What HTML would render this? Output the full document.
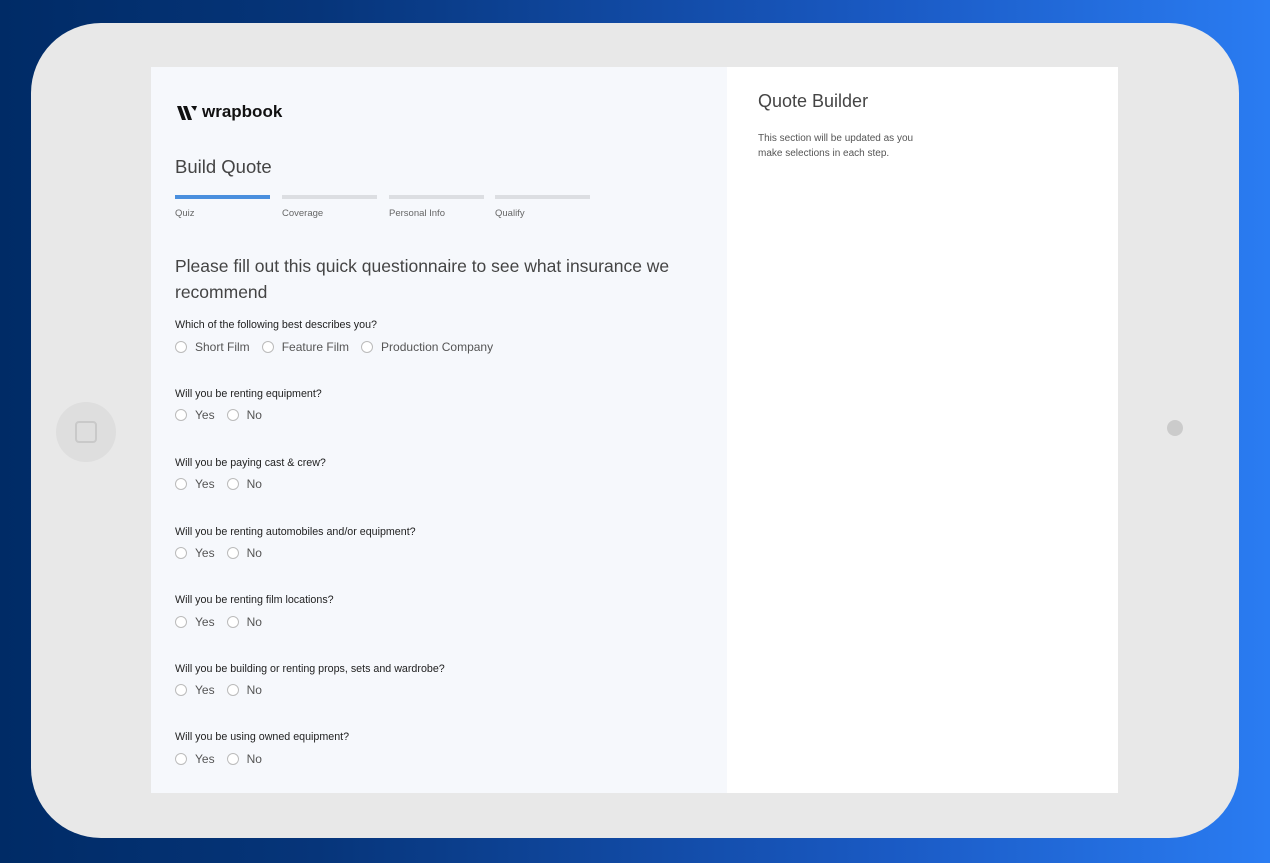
<!DOCTYPE html>
<html><head><meta charset="utf-8"><style>
*{margin:0;padding:0;box-sizing:border-box}
body{width:1270px;height:863px;overflow:hidden;background:linear-gradient(90deg,#002b66 0%,#06357a 25%,#1a5ac4 70%,#2a7cf2 100%);font-family:"Liberation Sans",sans-serif;position:relative}
.tab{position:absolute;left:31px;top:23px;width:1208px;height:815px;background:#e8e8e8;border-radius:70px}
.home{position:absolute;left:56px;top:402px;width:60px;height:60px;border-radius:50%;background:#dedede}
.home i{position:absolute;left:19px;top:19px;width:22px;height:22px;border:2px solid #c9c9c9;border-radius:4px}
.cam{position:absolute;left:1167px;top:420px;width:16px;height:16px;border-radius:50%;background:#cbcbcb}
.left{position:absolute;left:151px;top:67px;width:576px;height:726px;background:#f6f8fc}
.right{position:absolute;left:727px;top:67px;width:391px;height:726px;background:#fff}
.t{position:absolute;color:#333;white-space:nowrap}
.bar{position:absolute;top:195px;height:4px;width:95px;background:#dcdee2}
.lbl{position:absolute;top:208px;font-size:9.5px;color:#666}
.q{position:absolute;left:175px;font-size:10.7px;color:#222}
.opt{position:absolute;left:175px;font-size:12px;color:#555;display:flex;align-items:center}
.opt span{display:inline-block;width:12px;height:12px;border:1px solid #bbb;border-radius:50%;background:#fff;margin-right:8px}
.opt b{font-weight:normal;margin-right:12px}
</style></head><body>
<div class="tab"></div>
<div class="home"><i></i></div>
<div class="cam"></div>
<div class="left"></div>
<div class="right"></div>
<svg style="position:absolute;left:177px;top:106px" width="22" height="14" viewBox="0 0 22 14"><path d="M0 0h4l5 14H5z M6 0h4l5 14h-4z M14 0h6l-2 5z" fill="#111"/></svg>
<div class="t" style="left:202px;top:102px;font-size:17px;font-weight:bold;color:#111">wrapbook</div>
<div class="t" style="left:175px;top:156px;font-size:18.5px;color:#444">Build Quote</div>
<div class="bar" style="left:175px;background:#4a8fde"></div>
<div class="bar" style="left:282px"></div>
<div class="bar" style="left:389px"></div>
<div class="bar" style="left:495px"></div>
<div class="lbl" style="left:175px">Quiz</div>
<div class="lbl" style="left:282px">Coverage</div>
<div class="lbl" style="left:389px">Personal Info</div>
<div class="lbl" style="left:495px">Qualify</div>
<div class="t" style="left:175px;top:253px;font-size:17.5px;line-height:26px;color:#444;white-space:normal;width:515px">Please fill out this quick questionnaire to see what insurance we recommend</div>
<div class="q" style="top:319px">Which of the following best describes you?</div>
<div class="opt" style="top:340px"><span></span><b>Short Film</b><span></span><b>Feature Film</b><span></span><b>Production Company</b></div>
<div class="q" style="top:388px">Will you be renting equipment?</div>
<div class="opt" style="top:408px"><span></span><b>Yes</b><span></span><b>No</b></div>
<div class="q" style="top:457px">Will you be paying cast &amp; crew?</div>
<div class="opt" style="top:477px"><span></span><b>Yes</b><span></span><b>No</b></div>
<div class="q" style="top:526px">Will you be renting automobiles and/or equipment?</div>
<div class="opt" style="top:546px"><span></span><b>Yes</b><span></span><b>No</b></div>
<div class="q" style="top:594px">Will you be renting film locations?</div>
<div class="opt" style="top:615px"><span></span><b>Yes</b><span></span><b>No</b></div>
<div class="q" style="top:663px">Will you be building or renting props, sets and wardrobe?</div>
<div class="opt" style="top:683px"><span></span><b>Yes</b><span></span><b>No</b></div>
<div class="q" style="top:731px">Will you be using owned equipment?</div>
<div class="opt" style="top:752px"><span></span><b>Yes</b><span></span><b>No</b></div>
<div class="t" style="left:758px;top:91px;font-size:18px;color:#444">Quote Builder</div>
<div class="t" style="left:758px;top:131px;font-size:10px;line-height:15px;color:#555">This section will be updated as you<br>make selections in each step.</div>
</body></html>
